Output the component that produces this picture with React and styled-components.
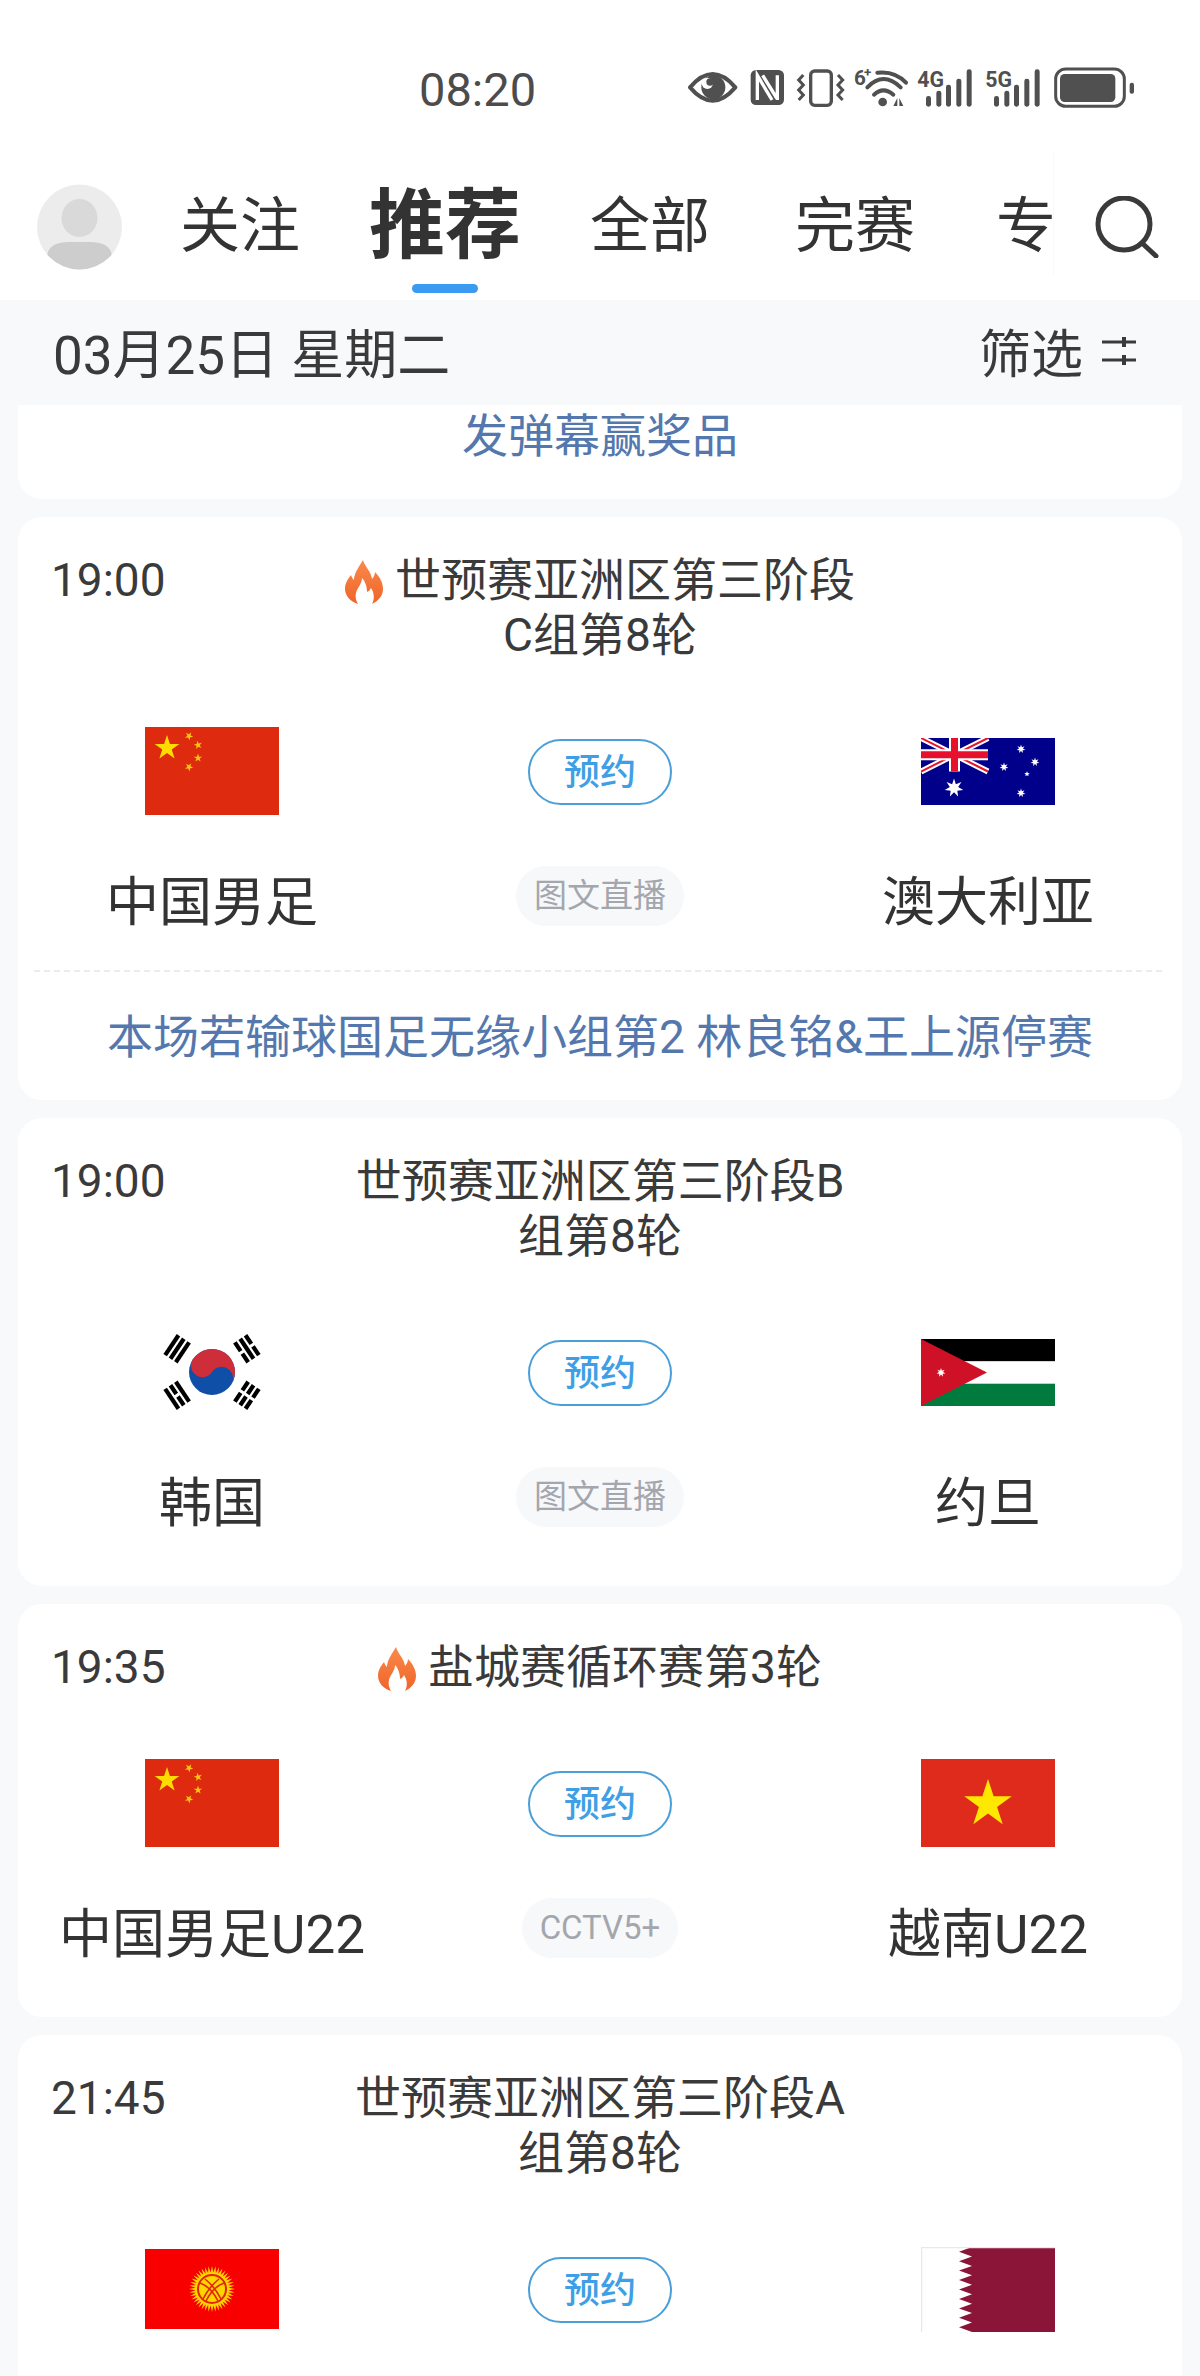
import React from "react";
import styled, { createGlobalStyle } from "styled-components";

const Global = createGlobalStyle`
  html, body { margin: 0; padding: 0; background: #f7f9fb; }
  * { box-sizing: border-box; }
`;

const Page = styled.div`
  width: 1200px;
  height: 2376px;
  overflow: hidden;
  background: #f7f9fb;
  color: #333;
  font-family: Roboto, "Noto Sans CJK SC", sans-serif;
`;

const StatusBar = styled.div`
  height: 150px;
  background: #fff;
  display: flex;
  justify-content: space-between;
  align-items: flex-start;
  padding: 62px 64px 0 419px;
`;
const Clock = styled.div`
  font-size: 47px;
  line-height: 56px;
  color: #4c4c4c;
`;
const StatusIcons = styled.svg`
  width: 448px;
  height: 44px;
  margin-top: 4px;
  display: block;
`;

const Nav = styled.nav`
  height: 150px;
  background: #fff;
  display: flex;
  align-items: flex-start;
`;
const Avatar = styled.svg`
  width: 85px;
  height: 86px;
  margin: 34px 0 0 37px;
  flex: none;
  display: block;
`;
const Tabs = styled.div`
  flex: 1;
  height: 150px;
  overflow: hidden;
  display: flex;
  gap: 85px;
  padding: 33px 0 0 58px;
  white-space: nowrap;
`;
const Tab = styled.div`
  position: relative;
  height: 117px;
  flex: none;
  font-size: ${(p) => (p.$active ? 76 : 60)}px;
  font-weight: ${(p) => (p.$active ? 700 : 400)};
  line-height: ${(p) => (p.$active ? 86 : 88)}px;
  margin: 0 ${(p) => (p.$active ? -16 : 0)}px;
  color: #333;
  &:last-child {
    margin-left: -4px;
  }
  ${(p) =>
    p.$active &&
    `&::after {
      content: "";
      position: absolute;
      left: 43px;
      bottom: 7px;
      width: 66px;
      height: 9px;
      border-radius: 5px;
      background: #3a9bf0;
    }`}
`;
const SearchBox = styled.div`
  width: 147px;
  height: 125px;
  flex: none;
  border-left: 1px solid #f9f9f9;
  padding: 46px 0 0 41px;
`;
const SearchIcon = styled.svg`
  width: 64px;
  height: 62px;
  display: block;
`;

const DateBar = styled.div`
  height: 105px;
  display: flex;
  justify-content: space-between;
  align-items: center;
  padding: 0 64px 4px 53px;
`;
const DateText = styled.div`
  font-size: 53px;
  color: #3a3a3a;
`;
const Filter = styled.div`
  display: flex;
  align-items: center;
  gap: 19px;
  font-size: 52px;
  color: #3a3a3a;
`;
const FilterIcon = styled.svg`
  width: 34px;
  height: 28px;
  display: block;
`;

const List = styled.div`
  display: flex;
  flex-direction: column;
  gap: 18px;
  padding: 0 18px;
`;
const Card = styled.section`
  background: #fff;
  border-radius: 24px;
`;
const TopCard = styled(Card)`
  height: 94px;
  border-radius: 0 0 24px 24px;
  text-align: center;
  font-size: 46px;
  line-height: 62px;
  color: #5478ad;
`;
const Header = styled.div`
  display: grid;
  grid-template-columns: 1fr 510px 1fr;
  padding: 36px 33px 0;
`;
const Time = styled.div`
  font-size: 46px;
  line-height: 55px;
  color: #3a3a3a;
`;
const Title = styled.div`
  font-size: 46px;
  line-height: 55px;
  text-align: center;
  color: #3a3a3a;
`;
const Fire = styled.svg`
  width: 38px;
  height: 44px;
  margin-right: 12px;
  vertical-align: -8px;
`;
const Match = styled.div`
  display: grid;
  grid-template-columns: repeat(3, 1fr);
  grid-template-rows: 88px 70px;
  row-gap: 53px;
  align-items: center;
  justify-items: center;
  padding: 64px 0 ${(p) => (p.$footer ? 32 : 47)}px;
`;
const TeamName = styled.div`
  font-size: 53px;
  line-height: 70px;
  color: #333;
  white-space: nowrap;
`;
const Reserve = styled.button`
  width: 144px;
  height: 66px;
  margin-top: 2px;
  border: 2px solid #4a9fd8;
  border-radius: 33px;
  background: #fff;
  color: #3f9fe6;
  font: 500 36px/64px Roboto, "Noto Sans CJK SC", sans-serif;
  padding: 0;
`;
const Channel = styled.div`
  height: 60px;
  margin-bottom: 14px;
  padding: 0 18px;
  border-radius: 30px;
  background: #f7f8fa;
  color: #a3a7ad;
  font-size: 33px;
  line-height: 60px;
`;
const Footer = styled.div`
  margin: 0 20px 0 16px;
  padding-left: 4px;
  border-top: 2px dashed #ececec;
  height: 130px;
  text-align: center;
  font-size: 46px;
  line-height: 130px;
  color: #5478ad;
  white-space: nowrap;
`;
const FlagSvg = styled.svg`
  width: 134px;
  height: ${(p) => p.$h}px;
  display: block;
`;

const starPts = (cx, cy, r, n = 5, inner = 0.382, rot = -90) => {
  const pts = [];
  for (let i = 0; i < n * 2; i++) {
    const a = ((rot + (i * 180) / n) * Math.PI) / 180;
    const rr = i % 2 ? r * inner : r;
    pts.push(`${(cx + rr * Math.cos(a)).toFixed(2)},${(cy + rr * Math.sin(a)).toFixed(2)}`);
  }
  return pts.join(" ");
};

const China = () => (
  <FlagSvg $h={88} viewBox="0 0 134 88">
    <rect width="134" height="88" fill="#de2b0f" />
    <polygon points={starPts(22, 21, 13)} fill="#ffdc00" />
    <polygon points={starPts(44, 9, 4.4, 5, 0.382, -60)} fill="#f9c80e" />
    <polygon points={starPts(53, 18, 4.4, 5, 0.382, -30)} fill="#f9c80e" />
    <polygon points={starPts(53, 31, 4.4)} fill="#f9c80e" />
    <polygon points={starPts(44, 40, 4.4, 5, 0.382, -60)} fill="#f9c80e" />
  </FlagSvg>
);

const Australia = () => (
  <FlagSvg $h={67} viewBox="0 0 134 67">
    <rect width="134" height="67" fill="#00008b" />
    <path d="M0 0L67 33.5M67 0L0 33.5" stroke="#fff" strokeWidth="6" />
    <path d="M0 0L67 33.5M67 0L0 33.5" stroke="#e8112d" strokeWidth="2" />
    <path d="M33.5 0V33.5M0 16.7H67" stroke="#fff" strokeWidth="11" />
    <path d="M33.5 0V33.5M0 16.7H67" stroke="#e8112d" strokeWidth="7" />
    <polygon points={starPts(33, 50, 9.5, 7, 0.45)} fill="#fff" />
    <polygon points={starPts(100, 11, 4.5, 7, 0.45)} fill="#fff" />
    <polygon points={starPts(114, 24, 4.5, 7, 0.45)} fill="#fff" />
    <polygon points={starPts(83, 29, 4.5, 7, 0.45)} fill="#fff" />
    <polygon points={starPts(106, 36, 2.8, 5, 0.45)} fill="#fff" />
    <polygon points={starPts(100, 55, 4.5, 7, 0.45)} fill="#fff" />
  </FlagSvg>
);

const Trigram = ({ angle, pattern }) => (
  <g transform={`translate(67 44) rotate(${angle})`}>
    {pattern.map((broken, i) => {
      const y = -35.5 - i * 6.4;
      return broken ? (
        <path key={i} d={`M-12 ${y}H-1.5M1.5 ${y}H12`} stroke="#000" strokeWidth="4.2" />
      ) : (
        <path key={i} d={`M-12 ${y}H12`} stroke="#000" strokeWidth="4.2" />
      );
    })}
  </g>
);

const Korea = () => (
  <FlagSvg $h={88} viewBox="0 0 134 88">
    <rect width="134" height="88" fill="#fff" />
    <Trigram angle={-56.3} pattern={[0, 0, 0]} />
    <Trigram angle={56.3} pattern={[1, 0, 1]} />
    <Trigram angle={123.7} pattern={[1, 1, 1]} />
    <Trigram angle={-123.7} pattern={[0, 1, 0]} />
    <g transform="translate(67 44) rotate(33.7)">
      <circle r="23" fill="#0f4fa8" />
      <path d="M-23 0A23 23 0 0 1 23 0A11.5 11.5 0 0 0 0 0A11.5 11.5 0 0 1 -23 0Z" fill="#cd2e3a" />
    </g>
  </FlagSvg>
);

const Jordan = () => (
  <FlagSvg $h={67} viewBox="0 0 134 67">
    <rect width="134" height="22.4" fill="#000" />
    <rect y="22.4" width="134" height="22.3" fill="#fff" />
    <rect y="44.7" width="134" height="22.3" fill="#007a3d" />
    <polygon points="0,0 66,33.5 0,67" fill="#ce1126" />
    <polygon points={starPts(20, 33.5, 4.6, 7, 0.45)} fill="#fff" />
  </FlagSvg>
);

const Vietnam = () => (
  <FlagSvg $h={88} viewBox="0 0 134 88">
    <rect width="134" height="88" fill="#de2b1c" />
    <polygon points={starPts(67, 45, 25)} fill="#ffe800" />
  </FlagSvg>
);

const Kyrgyz = () => (
  <FlagSvg $h={80} viewBox="0 0 134 80">
    <rect width="134" height="80" fill="#f90000" />
    <polygon points={starPts(67, 40, 23, 40, 0.72)} fill="#ffd500" />
    <circle cx="67" cy="40" r="14" fill="#ffd500" stroke="#e2260a" strokeWidth="2" />
    <path d="M55 34Q66 38 73 52M79 34Q68 38 61 52M60 30Q70 38 76 50M74 30Q64 38 58 50" stroke="#e2260a" strokeWidth="1.6" fill="none" />
  </FlagSvg>
);

const qatarEdge = () => {
  const pts = ["0,0", "51,0"];
  const n = 9;
  const step = 85 / n;
  for (let i = 0; i < n; i++) {
    pts.push(`38,${(i * step + step / 2).toFixed(1)}`);
    pts.push(`51,${((i + 1) * step).toFixed(1)}`);
  }
  pts.push("0,85");
  return pts.join(" ");
};

const Qatar = () => (
  <FlagSvg $h={85} viewBox="0 0 134 85">
    <rect width="134" height="85" fill="#8a1538" />
    <polygon points={qatarEdge()} fill="#fff" />
    <path d="M.5 85V.5H134" fill="none" stroke="#e8e8e8" strokeWidth="1.5" />
  </FlagSvg>
);

const Flame = () => (
  <Fire viewBox="0 0 38 44">
    <defs>
      <linearGradient id="flame" x1="0" y1="0" x2="0" y2="1">
        <stop offset="0" stopColor="#f98a4a" />
        <stop offset="1" stopColor="#f0642a" />
      </linearGradient>
    </defs>
    <path
      d="M18 0C20 7 26 11 27 19C29 17 30 14 30 12C35 17 38 23 38 29C38 36 33 41 27 44C30 39 29 32 26 28C25 30 24 31 22 32C22 26 20 21 17 18C17 24 12 28 11 33C10 37 11 41 13 44C6 42 0 36 0 29C0 23 3 19 6 15C7 18 8 19 9 20C9 13 14 7 18 0Z"
      fill="url(#flame)"
    />
  </Fire>
);

const Bars = ({ x }) => (
  <g fill="#505050">
    <rect x={x} y="138" width="15" height="32" rx="7" />
    <rect x={x + 31} y="122" width="15" height="48" rx="7" />
    <rect x={x + 60} y="104" width="15" height="66" rx="7" />
    <rect x={x + 91} y="86" width="15" height="84" rx="7" />
    <rect x={x + 122} y="58" width="15" height="112" rx="7" />
  </g>
);

const IconText = styled.text`
  font-family: "Roboto", sans-serif;
  font-weight: 700;
  font-size: ${(p) => p.$size}px;
  fill: #505050;
`;

const Status = () => (
  <StatusIcons viewBox="84 48 1344 132">
    <path d="M90 112Q158 32 226 112Q158 192 90 112Z" fill="none" stroke="#505050" strokeWidth="12" strokeLinejoin="round" />
    <circle cx="160" cy="112" r="36" fill="#505050" />
    <circle cx="142" cy="100" r="17" fill="#fff" />
    <circle cx="150" cy="96" r="11" fill="#505050" />

    <rect x="272" y="60" width="100" height="105" rx="16" fill="#505050" />
    <path d="M292 150V76L336 150M352 150V76M308 76L350 144" fill="none" stroke="#fff" strokeWidth="10" />

    <rect x="452" y="63" width="62" height="103" rx="12" fill="none" stroke="#505050" strokeWidth="10" />
    <path d="M430 75L416 90L430 105L416 120L430 135L416 150M534 75L548 90L534 105L548 120L534 135L548 150" fill="none" stroke="#505050" strokeWidth="9" />

    <IconText x="582" y="104" $size={62}>6</IconText>
    <IconText x="612" y="80" $size={40}>+</IconText>
    <path d="M652 68Q705 62 738 98M622 112Q670 62 722 112M642 134Q670 108 700 134" fill="none" stroke="#505050" strokeWidth="12" strokeLinecap="round" />
    <circle cx="668" cy="156" r="13" fill="#505050" />
    <path d="M700 168L712 144V168ZM718 168V144L730 168Z" fill="#505050" />

    <IconText x="772" y="112" $size={64}>4G</IconText>
    <Bars x={798} />
    <IconText x="976" y="112" $size={64}>5G</IconText>
    <Bars x={1002} />

    <rect x="1187" y="57" width="206" height="112" rx="30" fill="none" stroke="#505050" strokeWidth="9" />
    <rect x="1200" y="72" width="166" height="84" rx="14" fill="#505050" />
    <rect x="1409" y="98" width="13" height="33" rx="6" fill="#505050" />
  </StatusIcons>
);

const matches = [
  {
    time: "19:00",
    hot: true,
    title: "世预赛亚洲区第三阶段C组第8轮",
    homeName: "中国男足",
    Home: China,
    awayName: "澳大利亚",
    Away: Australia,
    channel: "图文直播",
    footer: "本场若输球国足无缘小组第2 林良铭&王上源停赛",
  },
  {
    time: "19:00",
    title: "世预赛亚洲区第三阶段B组第8轮",
    homeName: "韩国",
    Home: Korea,
    awayName: "约旦",
    Away: Jordan,
    channel: "图文直播",
  },
  {
    time: "19:35",
    hot: true,
    title: "盐城赛循环赛第3轮",
    homeName: "中国男足U22",
    Home: China,
    awayName: "越南U22",
    Away: Vietnam,
    channel: "CCTV5+",
  },
  {
    time: "21:45",
    title: "世预赛亚洲区第三阶段A组第8轮",
    Home: Kyrgyz,
    Away: Qatar,
  },
];

export default function App() {
  return (
    <Page>
      <Global />
      <StatusBar>
        <Clock>08:20</Clock>
        <Status />
      </StatusBar>
      <Nav>
        <Avatar viewBox="0 0 85 86">
          <defs>
            <clipPath id="av">
              <circle cx="42.5" cy="43" r="42.5" />
            </clipPath>
          </defs>
          <g clipPath="url(#av)">
            <rect width="85" height="86" fill="#ececec" />
            <ellipse cx="42.5" cy="34" rx="18" ry="19" fill="#d9d9d9" />
            <path d="M10 86V74Q10 58 32 58H53Q75 58 75 74V86Z" fill="#cdcdcd" />
          </g>
        </Avatar>
        <Tabs>
          <Tab>关注</Tab>
          <Tab $active>推荐</Tab>
          <Tab>全部</Tab>
          <Tab>完赛</Tab>
          <Tab>专</Tab>
        </Tabs>
        <SearchBox>
          <SearchIcon viewBox="0 0 64 62">
            <circle cx="29" cy="28" r="26" fill="none" stroke="#3a3a3a" strokeWidth="5" />
            <path d="M47 47L61 60" stroke="#3a3a3a" strokeWidth="5" strokeLinecap="round" />
          </SearchIcon>
        </SearchBox>
      </Nav>
      <DateBar>
        <DateText>03月25日 星期二</DateText>
        <Filter>
          筛选
          <FilterIcon viewBox="0 0 34 28">
            <path d="M0 5H34M0 23H34" stroke="#3a3a3a" strokeWidth="3" />
            <path d="M22 0V10M22 18V28" stroke="#3a3a3a" strokeWidth="4" />
          </FilterIcon>
        </Filter>
      </DateBar>
      <List>
        <TopCard>发弹幕赢奖品</TopCard>
        {matches.map((m, i) => (
          <Card key={i}>
            <Header>
              <Time>{m.time}</Time>
              <Title>
                {m.hot && <Flame />}
                {m.title}
              </Title>
            </Header>
            <Match $footer={!!m.footer}>
              <m.Home />
              <Reserve>预约</Reserve>
              <m.Away />
              {m.channel && (
                <>
                  <TeamName>{m.homeName}</TeamName>
                  <Channel>{m.channel}</Channel>
                  <TeamName>{m.awayName}</TeamName>
                </>
              )}
            </Match>
            {m.footer && <Footer>{m.footer}</Footer>}
          </Card>
        ))}
      </List>
    </Page>
  );
}
